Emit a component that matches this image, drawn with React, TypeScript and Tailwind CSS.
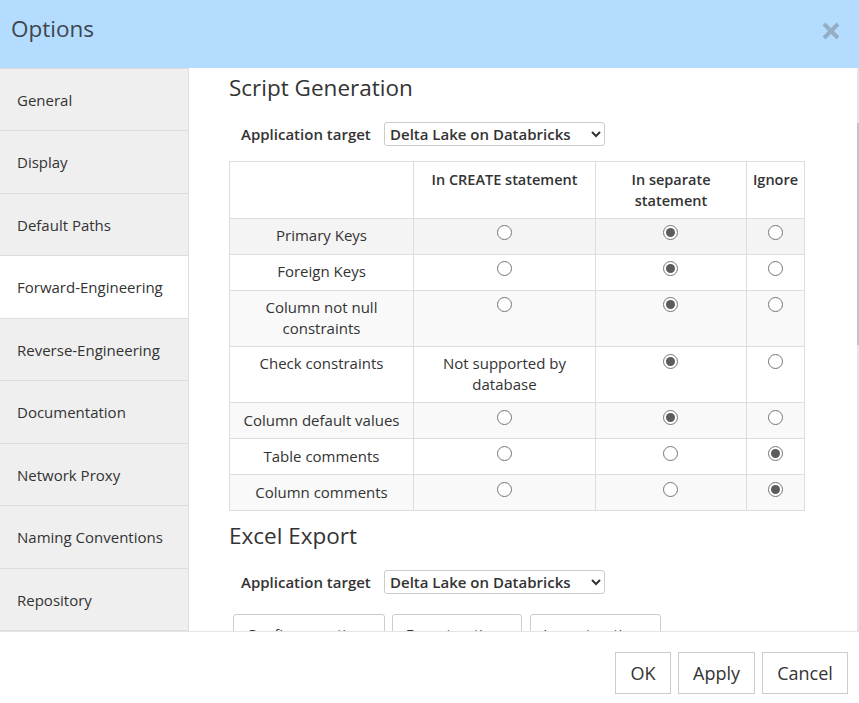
import React from "react";

const navItems = [
  "General",
  "Display",
  "Default Paths",
  "Forward-Engineering",
  "Reverse-Engineering",
  "Documentation",
  "Network Proxy",
  "Naming Conventions",
  "Repository",
];

const rows = [
  { label: "Primary Keys", checked: 1, h: "h-9", bg: "bg-[#f4f4f4]" },
  { label: "Foreign Keys", checked: 1, h: "h-9", bg: "bg-white" },
  { label: "Column not null constraints", checked: 1, h: "h-[56px]", bg: "bg-[#f9f9f9]", narrow: true },
  { label: "Check constraints", checked: 1, h: "h-[56px]", bg: "bg-white", unsupported: true, radioLow: true },
  { label: "Column default values", checked: 1, h: "h-9", bg: "bg-[#f9f9f9]", low: true, radioLow: true },
  { label: "Table comments", checked: 2, h: "h-9", bg: "bg-white", low: true, radioLow: true },
  { label: "Column comments", checked: 2, h: "h-9", bg: "bg-[#f9f9f9]", low: true, radioLow: true },
];

const Radio = ({ on }: { on: boolean }) => (
  <span className="inline-block align-top w-[15px] h-[15px] rounded-full border border-[#767676] bg-white">
    {on && <span className="block w-[9px] h-[9px] m-[2px] rounded-full bg-[#5c5c5c]" />}
  </span>
);

const TargetRow = () => (
  <div className="flex items-center ml-3 h-6">
    <label className="font-semibold text-[#333] w-[143px]">Application target</label>
    <select
      defaultValue="Delta Lake on Databricks"
      className="w-[221px] h-6 pl-[1px] font-semibold text-[#333] bg-white border border-[#ccc] rounded-[3px] text-[15px]"
    >
      <option>Delta Lake on Databricks</option>
    </select>
  </div>
);

const cell = "border border-[#ddd] px-1 pt-[6px] pb-[7px] text-center align-top";
const head = "border border-[#ddd] px-1 pt-[7px] pb-[6px] text-center align-top font-semibold text-[14.5px]";

export default function App() {
  return (
    <div className="w-[859px] h-[703px] flex flex-col bg-white text-[15px] leading-[21px] text-[#333] font-['Open_Sans',sans-serif] overflow-hidden">
      <div className="h-[68px] shrink-0 bg-[#b3dcff] flex items-center justify-between pl-[11px] pr-[18px]">
        <h1 className="text-[22.5px] leading-[26px] text-[#40464d] -mt-[10px]">Options</h1>
        <svg width="20" height="20" viewBox="0 0 20 20" className="-mt-[6px]">
          <path d="M3 3 L17 17 M17 3 L3 17" stroke="#95aec4" strokeWidth="4" />
        </svg>
      </div>

      <div className="flex flex-1 min-h-0">
        <div className="w-[189px] shrink-0 overflow-hidden border-r border-t border-[#ddd] bg-[#efefef]">
          {navItems.map((item, i) => (
            <div
              key={item}
              className={
                "pl-[17px] pt-[1px] flex items-center border-b border-[#ddd] " +
                (i === 0 ? "h-[62.25px] " : "h-[62.5px] ") +
                (item === "Forward-Engineering" ? "bg-white" : "bg-[#efefef]")
              }
            >
              {item}
            </div>
          ))}
        </div>

        <div className="flex-1 overflow-hidden pl-10 pr-[52px]">
          <h2 className="text-[22.5px] leading-[26px] mt-[7px] mb-[21px]">Script Generation</h2>
          <TargetRow />
          <table className="mt-[15px] w-[575px] border-collapse table-fixed">
            <colgroup>
              <col className="w-[184px]" />
              <col className="w-[182px]" />
              <col className="w-[151px]" />
              <col className="w-[58px]" />
            </colgroup>
            <thead>
              <tr className="h-[57px]">
                <th className={head}></th>
                <th className={head}>In CREATE statement</th>
                <th className={head + " !px-8"}>In separate statement</th>
                <th className={head + " !px-0"}>Ignore</th>
              </tr>
            </thead>
            <tbody>
              {rows.map((row) => {
                const textCell = cell + (row.low ? " !pt-[7px] !pb-[6px]" : "");
                const radioCell = cell + (row.radioLow ? " !pt-[7px] !pb-[6px]" : "");
                return (
                  <tr key={row.label} className={row.bg + " " + row.h}>
                    <td className={textCell + (row.narrow ? " !px-[30px]" : "")}>{row.label}</td>
                    {row.unsupported ? (
                      <td className={textCell + " !px-6"}>Not supported by database</td>
                    ) : (
                      <td className={radioCell}>
                        <Radio on={false} />
                      </td>
                    )}
                    <td className={radioCell + " !pr-[6px]"}>
                      <Radio on={row.checked === 1} />
                    </td>
                    <td className={radioCell}>
                      <Radio on={row.checked === 2} />
                    </td>
                  </tr>
                );
              })}
            </tbody>
          </table>

          <h2 className="text-[22.5px] leading-[26px] mt-[12px] mb-[21px]">Excel Export</h2>
          <TargetRow />
          <div className="flex gap-[7px] ml-1 mt-[20px]">
            <button className="w-[152px] h-9 border border-[#ccc] rounded-[3px] pt-[4px]">Configure options</button>
            <button className="w-[130px] h-9 border border-[#ccc] rounded-[3px] pt-[4px]">Export options</button>
            <button className="w-[131px] h-9 ml-[1px] border border-[#ccc] rounded-[3px] pt-[4px]">Import options</button>
          </div>
        </div>

        {/* thin scrollbar on the right edge */}
        <div className="w-[2px] shrink-0 flex flex-col bg-[#e3e3e3]">
          <div className="h-[55px]" />
          <div className="h-[222px] bg-[#c4c4c4]" />
        </div>
      </div>

      <div className="h-[72px] shrink-0 border-t border-[#e5e5e5] bg-white flex justify-end items-start gap-[7px] pt-5 pr-[11px] relative z-10 text-[18px]">
        <button className="w-[56px] h-[42px] border border-[#ccc] text-[#333]">OK</button>
        <button className="w-[77px] h-[42px] border border-[#ccc] text-[#333]">Apply</button>
        <button className="w-[86px] h-[42px] border border-[#ccc] text-[#333]">Cancel</button>
      </div>
    </div>
  );
}
